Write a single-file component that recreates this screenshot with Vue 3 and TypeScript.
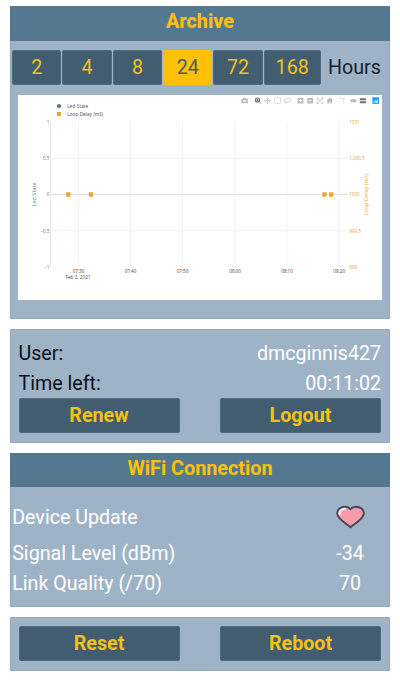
<script setup lang="ts">
import { ref } from 'vue'

interface Tick {
  pos: number
  label: string
}

const ranges: number[] = [2, 4, 8, 24, 72, 168]
const selected = ref<number>(24)

const timeTicks: Tick[] = [
  { pos: 78.5, label: '07:30' },
  { pos: 130.5, label: '07:40' },
  { pos: 182.5, label: '07:50' },
  { pos: 235, label: '08:00' },
  { pos: 287, label: '08:10' },
  { pos: 339.2, label: '08:20' },
]
const ledTicks: Tick[] = [
  { pos: 122, label: '1' },
  { pos: 158.3, label: '0.5' },
  { pos: 194.5, label: '0' },
  { pos: 230.8, label: '−0.5' },
  { pos: 267, label: '−1' },
]
const delayTicks: Tick[] = [
  { pos: 122, label: '1001' },
  { pos: 158.3, label: '1,000.5' },
  { pos: 194.5, label: '1000' },
  { pos: 230.8, label: '999.5' },
  { pos: 267, label: '999' },
]
const samples: number[] = [68.2, 91, 324.5, 331.2]
</script>

<template>
  <main class="page">
    <section class="panel archive">
      <h2 class="title">Archive</h2>
      <div class="ranges">
        <button
          v-for="r in ranges"
          :key="r"
          class="range"
          :class="{ active: r === selected, wide: r > 99 }"
          @click="selected = r"
        >{{ r }}</button>
        <span class="unit">Hours</span>
      </div>
      <svg class="chart" viewBox="18 95 364 205">
        <g class="grid">
          <path v-for="t in timeTicks" :key="t.label" :d="`M${t.pos} 122V267`" />
          <path d="M50.5 158.5H348M50.5 230.8H348" />
          <path class="axis" d="M50.5 122V267" />
          <path class="zero" d="M50.5 194.5H348" />
        </g>
        <rect v-for="x in samples" :key="x" class="sample" :x="x - 2.2" y="192.3" width="4.4" height="4.4" rx=".4" />

        <circle class="led" cx="59" cy="106" r="2.1" />
        <rect class="sample" x="57" y="112" width="4" height="4" />
        <text class="legend" x="67.2" y="107.8" textLength="21">Led State</text>
        <text class="legend" x="67.2" y="115.8" textLength="36">Loop Delay (mS)</text>

        <text v-for="t in ledTicks" :key="t.label" class="tick led-text" x="49.5" :y="t.pos + 1.7" text-anchor="end">{{ t.label }}</text>
        <text v-for="t in delayTicks" :key="t.label" class="tick delay-text" x="349.2" :y="t.pos + 1.7">{{ t.label }}</text>
        <text v-for="t in timeTicks" :key="t.label" class="tick" :x="t.pos" y="272.7" text-anchor="middle">{{ t.label }}</text>
        <text class="tick" x="78" y="278.9" text-anchor="middle" textLength="25">Feb 2, 2021</text>
        <text class="name led-text" transform="translate(35.5 194.5) rotate(-90)" text-anchor="middle" textLength="24">Led State</text>
        <text class="name delay-text" transform="translate(367.5 194.5) rotate(-90)" text-anchor="middle" textLength="42">Loop Delay (mS)</text>

        <g class="tools">
          <path d="M241.4 98.8h1.4l.7-1h2.2l.7 1h1.4v4.5h-6.4z" />
          <circle class="hole" cx="244.6" cy="101" r="1.3" />
          <g class="dark">
            <circle class="ring" cx="257.4" cy="100" r="2" />
            <path class="line thick" d="M258.9 101.5l2 2M256.5 100h1.8M257.4 99.1v1.8" />
          </g>
          <path class="line" d="M267.5 97.6v6.2M264.4 100.7h6.2M266.6 98.5l.9-.9.9.9M266.6 102.9l.9.9.9-.9M265.3 99.8l-.9.9.9.9M269.7 99.8l.9.9-.9.9" />
          <rect class="line dashed" x="274.7" y="97.9" width="5.8" height="5.6" />
          <path class="line" d="M285 101.6c-1.6-1.7.2-3.5 2.7-3.4 2.8 0 3.8 2.7 1.4 3.6-1.4.6-3 .4-4.1-.2-.6.8.8 1 .4 2.2" />
          <rect x="297.6" y="97.9" width="5.8" height="5.6" />
          <rect x="307.2" y="97.9" width="5.8" height="5.6" />
          <path class="mark" d="M299 100.7h3M300.5 99.2v3M308.6 100.7h3" />
          <path class="line" d="M317 98l6 5.4M323 98l-6 5.4M317 99.5V98h1.6M321.4 98h1.6v1.5M317 101.9v1.5h1.6M321.4 103.4h1.6v-1.5" />
          <path d="M326.4 101l3.3-3.2 1.4 1.3v-.8h.9v1.7l1 1h-.9v2.5h-1.7v-1.7h-1.4v1.7h-1.7V101z" />
          <path class="line dashed" d="M339.6 98.6h4.8M343.8 99v4.5" />
          <path d="M350 100.7l1.4-1.5h4.8v3h-4.8z" />
          <path class="dark" d="M359.8 98.3h6.2v2h-6.2zM359.8 101.3h6.2v2h-6.2z" />
          <rect class="brand" x="372.4" y="97.3" width="6.6" height="6.6" />
          <path class="bars" d="M374 102.8v-1.6M375.3 102.8v-2.7M376.5 102.8v-2M377.7 102.8v-3.4" />
        </g>
      </svg>
    </section>

    <section class="panel session">
      <div class="row"><span>User:</span><span class="light">dmcginnis427</span></div>
      <div class="row"><span>Time left:</span><span class="light">00:11:02</span></div>
      <div class="actions">
        <button class="action">Renew</button>
        <button class="action">Logout</button>
      </div>
    </section>

    <section class="panel wifi">
      <h2 class="title">WiFi Connection</h2>
      <div class="stats">
        <span class="update">Device Update</span>
        <span class="value">
          <svg class="heart" viewBox="0 0 30 24">
            <path class="shape" d="M15 22.6C11.5 19.3 1.2 14.3 1.2 8.2 1.2 2.3 10.4-1.2 15 3.9 19.6-1.2 28.8 2.3 28.8 8.2 28.8 14.3 18.5 19.3 15 22.6Z" />
            <path class="shine" d="M3.7 9.3C3.2 6 5.8 3.5 9.2 3.5" />
          </svg>
        </span>
        <span>Signal Level (dBm)</span><span class="value">-34</span>
        <span>Link Quality (/70)</span><span class="value">70</span>
      </div>
    </section>

    <section class="panel power">
      <div class="actions">
        <button class="action">Reset</button>
        <button class="action">Reboot</button>
      </div>
    </section>
  </main>
</template>

<style>
body {
  background: #fff;
}
</style>

<style scoped>
.page {
  box-sizing: border-box;
  width: 400px;
  height: 680px;
  padding: 6px 10px 0;
  display: flex;
  flex-direction: column;
  gap: 10px;
  font: 19.65px/30px Roboto, sans-serif;
  color: #080e14;
}
.panel {
  box-sizing: border-box;
  background: #9fb3c7;
  border: 1px solid #8ea6b8;
  border-radius: 1px;
}
.archive { height: 313px; }
.session { height: 114px; padding: 9px 8px 0 7.5px; }
.wifi { height: 154px; }
.power { height: 54px; padding: 8px 8px 0 7.5px; }
.title {
  height: 34px;
  margin: -1px -1px 0;
  background: #557891;
  color: #ffc107;
  font-size: 19.8px;
  line-height: 31px;
  font-weight: 700;
  text-align: center;
}
.archive .title {
  height: 35px;
  font-weight: 800;
}
.ranges {
  display: flex;
  gap: 1px;
  height: 35px;
  margin-bottom: 10px;
  padding: 9px 0 0 1.2px;
}
.range, .action {
  box-sizing: border-box;
  height: 35px;
  margin: 0;
  padding: 0;
  border: 1px solid #4c6b81;
  border-radius: 2px;
  background: #425c70;
  color: #f3c314;
  font: 19.7px/33px Roboto, sans-serif;
}
.range { width: 49.3px; }
.range.wide { width: 57px; }
.range.active {
  background: #ffc107;
  border-color: #ffc107;
  color: #425c70;
}
.unit {
  padding-left: 6.4px;
  line-height: 36px;
  color: #17222b;
}
.chart {
  display: block;
  width: 364px;
  height: 205px;
  margin-left: 7px;
  background: #fff;
  font-family: "Open Sans", sans-serif;
}
.grid path { stroke: #eee; stroke-width: .7; fill: none; }
.grid .axis { stroke: #dce3e8; }
.grid .zero { stroke: #dfe2e4; stroke-width: 1; }
.sample { fill: #f0a52b; }
.led { fill: #557891; }
.legend { font-size: 4.6px; fill: #444; }
.tick { font-size: 4.6px; fill: #444; }
.name { font-size: 5.4px; }
.tick.led-text, .name.led-text { fill: #557891; }
.tick.delay-text, .name.delay-text { fill: #dda52c; }
.tools { fill: #b9b9b9; }
.tools .dark { fill: #6d6d6d; }
.tools .line { fill: none; stroke: #b9b9b9; stroke-width: .7; }
.tools .dashed { stroke-dasharray: 1.2 .8; }
.tools .ring { fill: none; stroke: #6d6d6d; stroke-width: 1.2; }
.tools .thick { stroke: #6d6d6d; stroke-width: 1; }
.tools .hole { fill: #fff; }
.tools .mark { stroke: #fff; stroke-width: .9; }
.tools .brand { fill: #119dff; }
.tools .bars { stroke: #fff; stroke-width: .8; }
.row {
  display: flex;
  justify-content: space-between;
}
.light { color: #fff; }
.actions {
  display: flex;
  justify-content: space-between;
}
.session .actions { margin-top: -1px; }
.action {
  width: 161px;
  font-weight: 700;
}
.stats {
  display: grid;
  grid-template-columns: 1fr 80px;
  grid-template-rows: 42px 30px 30px;
  padding: 10px 0 0 1.2px;
  color: #fff;
}
.update { line-height: 41px; }
.value { padding-left: 2px; text-align: center; }
.heart {
  display: block;
  width: 29px;
  height: 24px;
  margin: 8px auto 0;
}
.shape { fill: #f99ba8; stroke: #424a57; stroke-width: 2; stroke-linejoin: round; }
.shine { fill: none; stroke: #fff; stroke-width: 2; stroke-linecap: round; }
</style>
